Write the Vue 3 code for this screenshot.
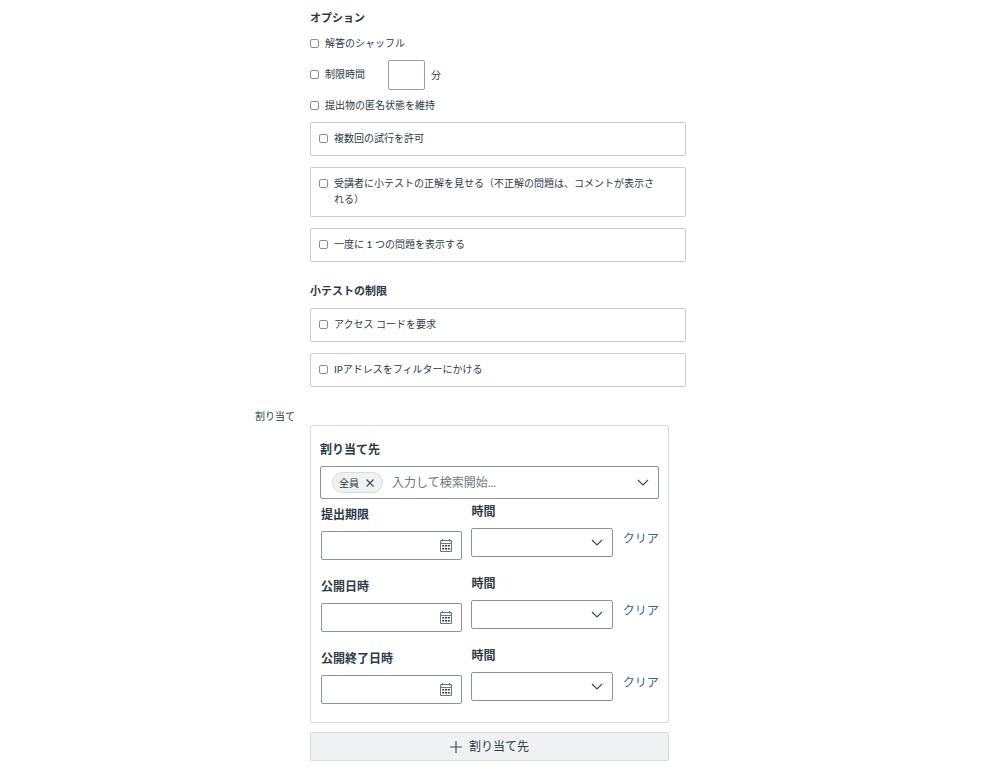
<script setup>
import { ref } from 'vue'

const restrictions = [
  { id: 'access-code', text: 'アクセス コードを要求' },
  { id: 'ip-filter', text: 'IPアドレスをフィルターにかける' }
]
const options = [
  { id: 'attempts', text: '複数回の試行を許可' },
  { id: 'answers', text: '受講者に小テストの正解を見せる（不正解の問題は、コメントが表示される）' },
  { id: 'one-question', text: '一度に 1 つの問題を表示する' }
]
const dates = ref([
  { id: 'due', label: '提出期限', date: '', time: '' },
  { id: 'from', label: '公開日時', date: '', time: '' },
  { id: 'until', label: '公開終了日時', date: '', time: '' }
])
function clear(row) {
  row.date = ''
  row.time = ''
}
</script>

<template>
  <form class="page" @submit.prevent>
    <div class="form-row">
      <div class="settings">
        <h2 class="heading">オプション</h2>
        <label class="check"><input type="checkbox" /><span>解答のシャッフル</span></label>
        <div class="time-limit">
          <label class="check"><input type="checkbox" /><span>制限時間</span></label>
          <label class="minutes"><input type="text" /><span>分</span></label>
        </div>
        <label class="check"><input type="checkbox" /><span>提出物の匿名状態を維持</span></label>
        <div class="boxes">
          <label v-for="o in options" :key="o.id" class="check boxed">
            <input type="checkbox" /><span>{{ o.text }}</span>
          </label>
        </div>
        <h2 class="heading restrictions">小テストの制限</h2>
        <div class="boxes">
          <label v-for="o in restrictions" :key="o.id" class="check boxed">
            <input type="checkbox" /><span>{{ o.text }}</span>
          </label>
        </div>
      </div>
    </div>

    <div class="form-row assign-row">
      <div class="side-label">割り当て</div>
      <div class="assign">
        <section class="card">
          <label class="label" for="assignee">割り当て先</label>
          <div class="combo">
            <button type="button" class="tag">
              全員
              <svg viewBox="0 0 8 8" width="8" height="8"><path d="M.5.5l7 7M7.5.5l-7 7" /></svg>
            </button>
            <input id="assignee" type="text" placeholder="入力して検索開始..." />
            <svg class="chevron" viewBox="0 0 12 8" width="12" height="8"><path d="M1 1l5 5 5-5" /></svg>
          </div>
          <div class="dates">
            <div v-for="row in dates" :key="row.id" class="date-row">
              <div class="date-col">
                <label class="label" :for="row.id + '-date'">{{ row.label }}</label>
                <div class="field">
                  <input :id="row.id + '-date'" v-model="row.date" type="text" />
                  <button type="button" class="calendar" aria-label="カレンダー">
                    <svg viewBox="0 0 12 13" width="12" height="13">
                      <path class="frame" d="M.5 1.5h11v11H.5zM.5 4.5h11M2.5 0v2.5M9.5 0v2.5" />
                      <path class="cells" d="M2.2 6h2v1.6h-2zM5 6h2v1.6H5zM7.8 6h2v1.6h-2zM2.2 9h2v1.6h-2zM5 9h2v1.6H5zM7.8 9h2v1.6h-2z" />
                    </svg>
                  </button>
                </div>
              </div>
              <div class="time-col">
                <label class="label" :for="row.id + '-time'">時間</label>
                <div class="field">
                  <select :id="row.id + '-time'" v-model="row.time"><option value=""></option></select>
                  <svg class="chevron" viewBox="0 0 12 8" width="12" height="8"><path d="M1 1l5 5 5-5" /></svg>
                </div>
              </div>
              <button type="button" class="clear" @click="clear(row)">クリア</button>
            </div>
          </div>
        </section>
        <button type="button" class="add">
          <svg viewBox="0 0 12 12" width="12" height="12"><path d="M6 0v12M0 6h12" /></svg>
          <span>割り当て先</span>
        </button>
      </div>
    </div>
  </form>
</template>

<style>
body {
  background: #fff;
}
</style>

<style scoped>
.page,
.page * {
  box-sizing: border-box;
}
.page {
  padding: 8px 0 20px;
  color: #2d3b45;
  font-family: Lato, "Noto Sans CJK JP", sans-serif;
  font-size: 10px;
  line-height: 16px;
}
input,
select,
button {
  margin: 0;
  padding: 0;
  border: 0;
  color: inherit;
  font: inherit;
  background: none;
  appearance: none;
}
button {
  cursor: pointer;
}
.form-row {
  display: grid;
  grid-template-columns: 31% 69%;
}
.settings {
  grid-column: 2;
  width: 54.5%;
  display: flex;
  flex-direction: column;
  gap: 6px;
}
.heading {
  margin: 0;
  font-size: 11px;
  line-height: 20px;
  font-weight: 700;
}
.restrictions {
  margin: 13px 0 1px;
}
.check {
  display: flex;
  align-items: flex-start;
  gap: 6px;
  padding: 1px 0 3px;
}
.check input {
  flex: none;
  width: 9px;
  height: 9px;
  margin-top: 4px;
  border: 1px solid #8f8f8f;
  border-radius: 2px;
  background: #fff;
}
.check input:checked {
  background: #2d3b45;
}
.time-limit {
  display: flex;
  align-items: center;
  gap: 23px;
}
.minutes {
  display: flex;
  align-items: center;
  gap: 6px;
}
.minutes input {
  width: 37px;
  height: 30px;
  padding: 0 6px;
  border: 1px solid #959fa9;
  border-radius: 2px;
}
.boxes {
  display: flex;
  flex-direction: column;
  gap: 11px;
}
.boxed {
  padding: 7px 24px 9px 8px;
  border: 1px solid #c7cdd1;
  border-radius: 2px;
}
.assign-row {
  margin-top: 19px;
}
.side-label {
  padding-right: 15px;
  text-align: right;
  line-height: 20px;
}
.assign {
  width: 52%;
  padding-top: 19px;
  font-size: 12px;
}
.card {
  padding: 14px 9px 18px;
  border: 1px solid #d7dbde;
  border-radius: 2px;
}
.label {
  display: block;
  font-weight: 700;
  line-height: 20px;
}
.combo {
  display: flex;
  align-items: center;
  height: 33px;
  margin-top: 6px;
  padding: 0 9px 0 11px;
  border: 1px solid #8b959e;
  border-radius: 2px;
}
.tag {
  display: flex;
  align-items: center;
  gap: 7px;
  height: 21px;
  padding: 0 8px 0 6px;
  border: 1px solid #d7dbde;
  border-radius: 11px;
  background: #f0f1f2;
  font-size: 10px;
  white-space: nowrap;
}
.combo input {
  flex: 1;
  min-width: 0;
  height: 24px;
  margin-left: 9px;
  outline: none;
}
.combo input::placeholder {
  color: #6b7780;
  opacity: 1;
}
svg {
  flex: none;
  fill: none;
  stroke: #3b4852;
  stroke-width: 1.1;
}
.dates {
  display: grid;
  gap: 14px;
  margin-top: 3px;
}
.date-row {
  display: grid;
  grid-template-columns: minmax(0, 1fr) minmax(0, 1fr) auto;
  column-gap: 9px;
  align-items: start;
  padding-left: 1px;
}
.date-col {
  padding-top: 3px;
}
.field {
  display: flex;
  align-items: center;
  height: 29px;
  margin-top: 6px;
  padding-right: 9px;
  border: 1px solid #8b959e;
  border-radius: 2px;
}
.field input,
.field select {
  flex: 1;
  min-width: 0;
  height: 27px;
  padding-left: 8px;
  outline: none;
}
.field .chevron {
  pointer-events: none;
}
.calendar {
  display: flex;
}
.frame {
  stroke: #6b7780;
  stroke-width: 1;
}
.cells {
  fill: #2d3b45;
  stroke: none;
}
.clear {
  margin: 27px 0 0 1px;
  color: #2b6c99;
  line-height: 20px;
}
.add {
  display: flex;
  align-items: center;
  justify-content: center;
  gap: 7px;
  width: 100%;
  height: 29px;
  margin-top: 9px;
  border: 1px solid #d7dbde;
  border-radius: 2px;
  background: #f0f1f2;
}
</style>
